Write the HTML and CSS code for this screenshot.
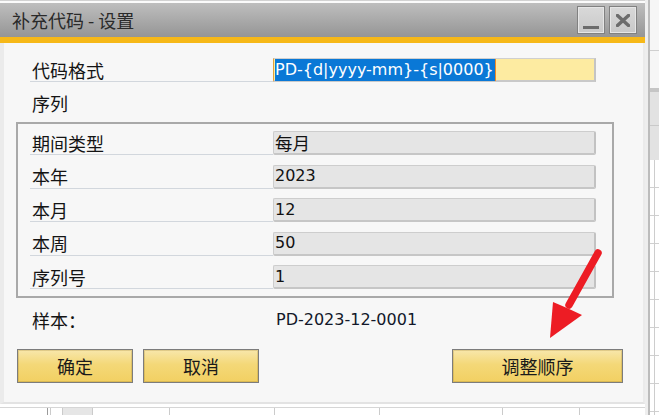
FILE: index.html
```html
<!DOCTYPE html>
<html lang="zh-CN">
<head>
<meta charset="utf-8">
<title>补充代码 - 设置</title>
<link rel="stylesheet" href="styles.css">
</head>
<body>
<div class="desk">
  <div class="window">
    <div class="titlebar">
      <span class="title">补充代码 - 设置</span>
      <div class="tb-buttons">
        <div class="tb-btn"><span class="min-bar"></span></div>
        <div class="tb-btn">
          <svg class="close-x" width="14" height="13" viewBox="0 0 14 13"><path d="M1.5 1.5 L12.5 11.5 M12.5 1.5 L1.5 11.5" stroke="#6c6c6c" stroke-width="3.4" stroke-linecap="square"/></svg>
        </div>
      </div>
    </div>
    <div class="accent"></div>
    <div class="body">
      <div class="row outer">
        <div class="label lined">代码格式</div>
        <div class="field edit"><span class="sel">PD-{d|yyyy-mm}-{s|0000}</span><span class="caret"></span></div>
      </div>
      <div class="row outer gap-a">
        <div class="label">序列</div>
      </div>
      <div class="group">
        <div class="row">
          <div class="label lined">期间类型</div>
          <div class="field ro"><span class="cjk">每月</span></div>
        </div>
        <div class="row">
          <div class="label lined">本年</div>
          <div class="field ro">2023</div>
        </div>
        <div class="row">
          <div class="label lined">本月</div>
          <div class="field ro">12</div>
        </div>
        <div class="row">
          <div class="label lined">本周</div>
          <div class="field ro">50</div>
        </div>
        <div class="row">
          <div class="label lined">序列号</div>
          <div class="field ro">1</div>
        </div>
      </div>
      <div class="row outer sample">
        <div class="label">样本：</div>
        <div class="value">PD-2023-12-0001</div>
      </div>
      <div class="actions">
        <div class="btn">确定</div>
        <div class="btn">取消</div>
        <div class="btn wide">调整顺序</div>
      </div>
    </div>
    <svg class="arrow" width="70" height="105" viewBox="0 0 70 105">
      <line x1="58" y1="12" x2="29" y2="64" stroke="#ed1c24" stroke-width="7.5" stroke-linecap="round"/>
      <polygon points="13,61 27,67 42,74 10,97" fill="#ed1c24"/>
    </svg>
  </div>
  <div class="side-sheet">
    <div class="side-edge"></div>
    <div class="side-line"></div>
    <div class="side-grid">
      <div class="sg-top"></div>
      <div class="sg-head"></div>
      <div class="sg-cells"></div>
    </div>
  </div>
  <div class="bottom-sheet">
    <div class="bs-row">
      <div class="bs-cell c1"></div>
      <div class="bs-cell c2"></div>
      <div class="bs-cell c3"></div>
      <div class="bs-cell c4"></div>
      <div class="bs-cell c5"></div>
      <div class="bs-cell c6"></div>
      <div class="bs-cell c7"></div>
      <div class="bs-cell c8"></div>
      <div class="bs-cell c9"></div>
      <div class="bs-cell c10"></div>
    </div>
  </div>
</div>
</body>
</html>
```
FILE: styles.css
```css
html, body {
  margin: 0;
  padding: 0;
}
body {
  background: #f0f0f0;
  font-family: "Noto Sans CJK SC", sans-serif;
  overflow: hidden;
}
.desk {
  display: grid;
  grid-template-columns: 645px 14px;
  grid-template-rows: 404px 11px;
  width: 659px;
  height: 415px;
}

/* ---------- window ---------- */
.window {
  grid-column: 1;
  grid-row: 1;
  position: relative;
  display: flex;
  flex-direction: column;
  box-sizing: border-box;
  height: 404px;
  border-top: 1px solid #d2d2d2;
  padding-top: 2px;
  background: #fbfbfb;
}
.titlebar {
  flex: none;
  height: 34px;
  display: flex;
  align-items: center;
  padding: 0 8px 0 12px;
  background: linear-gradient(#bebebe, #959595);
}
.title {
  font-size: 18px;
  line-height: 1;
  color: #2a2a2a;
}
.tb-buttons {
  margin-left: auto;
  display: flex;
  gap: 4px;
}
.tb-btn {
  width: 28px;
  height: 28px;
  box-sizing: border-box;
  border: 1px solid #818181;
  box-shadow: inset 0 0 0 1px #e6e6e6;
  background: linear-gradient(#d9d9d9, #c8c8c8);
  display: flex;
  align-items: center;
  justify-content: center;
}
.min-bar {
  width: 16px;
  height: 3px;
  background: #6c6c6c;
  margin-top: 14px;
}
.close-x {
  display: block;
  margin-top: 1px;
}
.accent {
  flex: none;
  height: 6px;
  background: #f6b818;
}
.body {
  flex: 1;
  display: flex;
  flex-direction: column;
  background: #f7f7f7;
  border-left: 4px solid #ebebeb;
  border-right: 2px solid #ebebeb;
  border-bottom: 2px solid #e3e3e3;
  padding: 15px 20px 0 0;
}

/* ---------- rows ---------- */
.row {
  display: flex;
  height: 24px;
  flex: none;
}
.row.outer {
  margin-left: 26px;
}
.row.gap-a {
  margin-top: 9px;
}
.label {
  width: 243px;
  box-sizing: border-box;
  padding-left: 2px;
  display: flex;
  align-items: center;
  font-size: 18px;
  line-height: 1;
  color: #141414;
}
.label.lined {
  border-bottom: 1px solid #d2d7dd;
}
.field {
  width: 323px;
  box-sizing: border-box;
  display: flex;
  align-items: center;
  font-family: "DejaVu Sans", "Noto Sans CJK SC", sans-serif;
  font-size: 16px;
  line-height: 1;
  color: #121212;
}
.field.ro {
  background: #e5e5e5;
  border: 1px solid #cdcdcd;
  border-right: 2px solid #c2c2c2;
  border-bottom: 2px solid #c6c6c6;
  border-radius: 2px;
  padding-left: 1px;
}
.cjk {
  font-family: "Noto Sans CJK SC", sans-serif;
  font-size: 17.5px;
}
.field.edit {
  background: #fdeba1;
  border: 1px solid #cfcfcf;
  border-right: 2px solid #c4c4c4;
  border-bottom: 2px solid #c9c9c9;
  border-left: 1px solid #e3a23a;
  padding-left: 1px;
}
.sel {
  display: flex;
  align-items: center;
  height: 22px;
  background: #0a78d6;
  color: #ffffff;
  padding-right: 1px;
}
.caret {
  width: 1px;
  height: 22px;
  background: #f08a24;
}

/* ---------- group ---------- */
.group {
  flex: none;
  margin: 7px 0 0 12px;
  width: 598px;
  box-sizing: border-box;
  border: 2px solid #a9a9a9;
  padding: 7px 16px 7px 12px;
  display: flex;
  flex-direction: column;
  gap: 9.5px;
}

/* ---------- sample ---------- */
.row.sample {
  margin-top: 10px;
}
.value {
  padding-left: 3px;
  display: flex;
  align-items: center;
  font-family: "DejaVu Sans", sans-serif;
  font-size: 16px;
  line-height: 1;
  color: #12182a;
}

/* ---------- buttons ---------- */
.actions {
  flex: none;
  display: flex;
  gap: 10px;
  margin: 17px 0 0 13px;
}
.btn {
  width: 116px;
  height: 34px;
  box-sizing: border-box;
  border: 1px solid #7c7c7c;
  box-shadow: inset 0 0 0 1px rgba(150, 120, 40, 0.25);
  background: linear-gradient(#f8e7ab 0%, #f4d878 45%, #f2d062 100%);
  display: flex;
  align-items: center;
  justify-content: center;
  font-size: 18px;
  line-height: 1;
  color: #1a1a1a;
}
.btn.wide {
  width: 171px;
  margin-left: auto;
}

/* ---------- annotation arrow ---------- */
.arrow {
  position: absolute;
  left: 540px;
  top: 240px;
}

/* ---------- background sheet (right) ---------- */
.side-sheet {
  grid-column: 2;
  grid-row: 1 / span 2;
  display: flex;
}
.side-edge {
  width: 3px;
  background: #eeeeee;
}
.side-line {
  width: 2px;
  background: #bcbcbc;
}
.side-grid {
  flex: 1;
  display: flex;
  flex-direction: column;
}
.sg-top {
  height: 88px;
  background: linear-gradient(#f6f6f6 50px, #cfcfcf 50px, #cfcfcf 51px, #f6f6f6 51px);
}
.sg-head {
  height: 68px;
  border-top: 4px solid #c5c5c5;
  background: linear-gradient(#e2e2e2 33px, #c9c9c9 33px, #c9c9c9 34px, #e2e2e2 34px);
}
.sg-cells {
  flex: 1;
  background:
    linear-gradient(90deg, transparent 4px, #cdcdcd 4px, #cdcdcd 5px, transparent 5px),
    repeating-linear-gradient(#ffffff 0, #ffffff 27px, #d0d0d0 27px, #d0d0d0 28px);
}

/* ---------- background sheet (bottom) ---------- */
.bottom-sheet {
  grid-column: 1;
  grid-row: 2;
  background: #ffffff;
  padding-top: 3px;
  box-sizing: border-box;
}
.bs-row {
  display: flex;
  height: 100%;
  border-top: 1px solid #d6d6d6;
}
.bs-cell {
  box-sizing: border-box;
  border-right: 1px solid #cbcbcb;
  height: 100%;
}
.c1 { width: 48px; border-right-color: #9a9a9a; }
.c2 { width: 3px; }
.c3 { width: 12px; }
.c4 { width: 30px; background: #e6e6e6; }
.c5 { width: 77px; }
.c6 { width: 105px; }
.c7 { width: 105px; }
.c8 { width: 123px; }
.c9 { width: 77px; }
.c10 { flex: 1; border-right: none; }
```
